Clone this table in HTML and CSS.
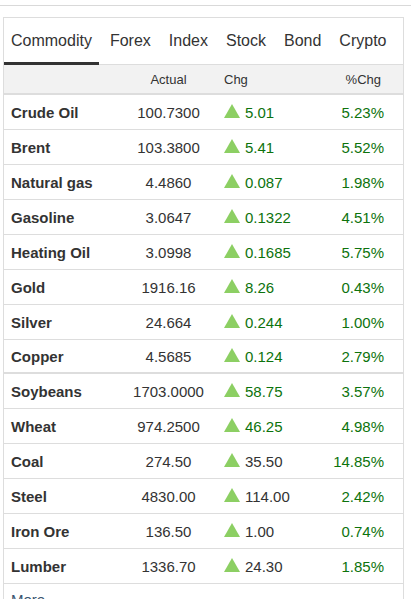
FILE: index.html
```html
<!DOCTYPE html>
<html>
<head>
<meta charset="utf-8">
<link rel="stylesheet" href="styles.css">
</head>
<body>
<div class="topline"></div>
<div class="panel">
  <div class="tabs">
    <div class="tab active">Commodity</div>
    <div class="tab">Forex</div>
    <div class="tab">Index</div>
    <div class="tab">Stock</div>
    <div class="tab">Bond</div>
    <div class="tab">Crypto</div>
  </div>
  <div class="row head">
    <div class="c-name"></div>
    <div class="c-act">Actual</div>
    <div class="c-chg">Chg</div>
    <div class="c-pct">%Chg</div>
  </div>
  <div class="row"><div class="c-name">Crude Oil</div><div class="c-act">100.7300</div><div class="c-chg up"><span class="tri"></span>5.01</div><div class="c-pct">5.23%</div></div>
  <div class="row"><div class="c-name">Brent</div><div class="c-act">103.3800</div><div class="c-chg up"><span class="tri"></span>5.41</div><div class="c-pct">5.52%</div></div>
  <div class="row"><div class="c-name">Natural gas</div><div class="c-act">4.4860</div><div class="c-chg up"><span class="tri"></span>0.087</div><div class="c-pct">1.98%</div></div>
  <div class="row"><div class="c-name">Gasoline</div><div class="c-act">3.0647</div><div class="c-chg up"><span class="tri"></span>0.1322</div><div class="c-pct">4.51%</div></div>
  <div class="row"><div class="c-name">Heating Oil</div><div class="c-act">3.0998</div><div class="c-chg up"><span class="tri"></span>0.1685</div><div class="c-pct">5.75%</div></div>
  <div class="row"><div class="c-name">Gold</div><div class="c-act">1916.16</div><div class="c-chg up"><span class="tri"></span>8.26</div><div class="c-pct">0.43%</div></div>
  <div class="row"><div class="c-name">Silver</div><div class="c-act">24.664</div><div class="c-chg up"><span class="tri"></span>0.244</div><div class="c-pct">1.00%</div></div>
  <div class="row group-end"><div class="c-name">Copper</div><div class="c-act">4.5685</div><div class="c-chg up"><span class="tri"></span>0.124</div><div class="c-pct">2.79%</div></div>
  <div class="row"><div class="c-name">Soybeans</div><div class="c-act">1703.0000</div><div class="c-chg up"><span class="tri"></span>58.75</div><div class="c-pct">3.57%</div></div>
  <div class="row"><div class="c-name">Wheat</div><div class="c-act">974.2500</div><div class="c-chg up"><span class="tri"></span>46.25</div><div class="c-pct">4.98%</div></div>
  <div class="row"><div class="c-name">Coal</div><div class="c-act">274.50</div><div class="c-chg"><span class="tri"></span>35.50</div><div class="c-pct">14.85%</div></div>
  <div class="row"><div class="c-name">Steel</div><div class="c-act">4830.00</div><div class="c-chg"><span class="tri"></span>114.00</div><div class="c-pct">2.42%</div></div>
  <div class="row"><div class="c-name">Iron Ore</div><div class="c-act">136.50</div><div class="c-chg"><span class="tri"></span>1.00</div><div class="c-pct">0.74%</div></div>
  <div class="row"><div class="c-name">Lumber</div><div class="c-act">1336.70</div><div class="c-chg"><span class="tri"></span>24.30</div><div class="c-pct">1.85%</div></div>
  <div class="more">More</div>
</div>
</body>
</html>
```

FILE: styles.css
```css
html, body {
  margin: 0;
  padding: 0;
  background: #fff;
}
body {
  font-family: "Liberation Sans", Arial, sans-serif;
  color: #333;
  overflow: hidden;
}
.topline {
  height: 5px;
  border-bottom: 1px solid #d9d9d9;
}
.panel {
  margin: 11px 0 0 3px;
  width: 401px;
  box-sizing: border-box;
  border: 1px solid #ddd;
  border-bottom: none;
}
.tabs {
  display: flex;
  gap: 4px;
  height: 46px;
  border-bottom: 1px solid #ddd;
  font-size: 16px;
}
.tab {
  padding: 13px 7px 0;
  line-height: 20px;
  height: 46px;
  box-sizing: border-box;
}
.tab.active {
  border-bottom: 3px solid #333;
  height: 47px;
}
.row {
  display: grid;
  grid-template-columns: 123px 83px 110px 83px;
  align-items: center;
  height: 34px;
  border-bottom: 1px solid #ddd;
  font-size: 15px;
}
.row.head {
  height: 28px;
  background: #f2f2f2;
  border-bottom: 2px solid #ddd;
  font-size: 13px;
}
.row.group-end {
  height: 32px;
  border-bottom: 2px solid #ddd;
}
.c-name {
  padding-left: 7px;
  font-weight: bold;
}
.c-act {
  text-align: center;
}
.c-chg {
  padding-left: 14px;
  display: flex;
  align-items: center;
}
.c-chg.up {
  color: #0d730d;
}
.c-pct {
  text-align: right;
  padding-right: 19px;
  color: #0d730d;
}
.head .c-pct {
  color: #333;
  padding-right: 22px;
}
.tri {
  width: 0;
  height: 0;
  border-left: 8px solid transparent;
  border-right: 8px solid transparent;
  border-bottom: 14px solid #8ccf63;
  margin-right: 5px;
  margin-top: -2px;
}
.head .tri { display: none; }
.more {
  padding: 7px 7px 0;
  font-size: 15px;
  line-height: 18px;
  color: #3a5570;
  height: 30px;
}
```
